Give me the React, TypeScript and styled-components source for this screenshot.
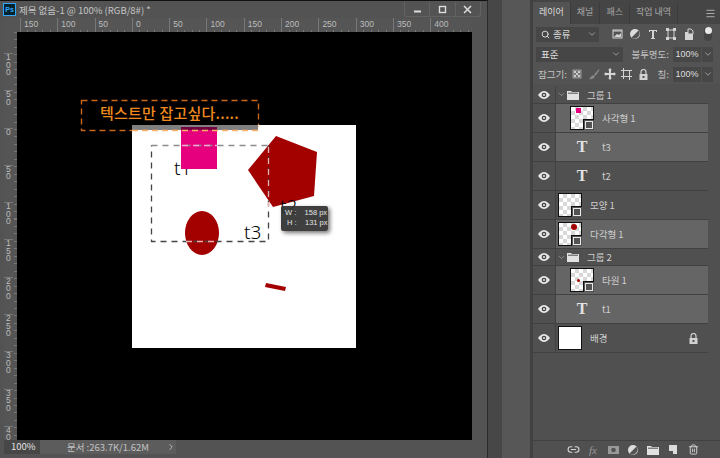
import React from "react";
import styled, { createGlobalStyle } from "styled-components";
import { ChevronDown, ChevronRight, Link2, Menu, Search, Trash2 } from "lucide-react";

const GlobalStyle = createGlobalStyle`
  html, body { margin: 0; padding: 0; background: #4a4a4a; overflow: hidden; }
  #root { width: 720px; height: 458px; }
  * { box-sizing: border-box; }
`;

const FONT = `"Noto Sans CJK KR", "Liberation Sans", sans-serif`;

const Screen = styled.div`
  width: 720px;
  height: 458px;
  display: flex;
  font-family: ${FONT};
  color: #cfcfcf;
  background: #4a4a4a;
`;

/* document window */
const Win = styled.div`
  width: 488px;
  height: 458px;
  display: flex;
  flex-direction: column;
  background: #535353;
  border-top: 1px solid #111;
  border-right: 1px solid #2b2b2b;
`;

const TitleBar = styled.div`
  height: 17px;
  display: flex;
  align-items: center;
  padding-left: 3px;
  gap: 3px;
`;

const PsLogo = styled.div`
  width: 13px;
  height: 13px;
  background: #04232f;
  border: 1px solid #31a8ff;
  color: #31a8ff;
  font: bold 7px "Liberation Sans", sans-serif;
  display: flex;
  align-items: center;
  justify-content: center;
`;

const TitleText = styled.div`
  font-size: 9.5px;
  color: #c4c4c4;
  flex: 1;
  white-space: nowrap;
`;

const WinButtons = styled.div`
  width: 77px;
  height: 15px;
  margin-right: 6px;
  display: flex;
  border: 1px solid #626262;
  border-top: none;
  border-radius: 0 0 3px 3px;
`;

const WinButton = styled.div`
  flex: 1;
  display: flex;
  align-items: center;
  justify-content: center;
  border-left: 1px solid #626262;
  &:first-child { border-left: none; }
`;

const HRuler = styled.div`
  height: 14px;
  display: flex;
  align-items: flex-start;
  margin-left: 4px;
  margin-right: 15px;
  padding-left: 16px;
  background-color: #555;
  background-image: repeating-linear-gradient(90deg, #787878 0 1px, transparent 1px 7.46px);
  background-size: 100% 2px;
  background-position: 16px bottom;
  background-repeat: no-repeat;
`;

const HTick = styled.div`
  width: 37.3px;
  flex: none;
  height: 12px;
  padding-left: 3px;
  border-left: 1px solid #787878;
  font: 8.5px/12px "Liberation Sans", sans-serif;
  color: #bcbcbc;
`;

const Middle = styled.div`
  flex: 1;
  display: flex;
  min-height: 0;
`;

const VRuler = styled.div`
  width: 13px;
  margin-left: 4px;
  display: flex;
  flex-direction: column;
  padding-top: 21px;
  overflow: hidden;
  background-color: #555;
  background-image: repeating-linear-gradient(180deg, #787878 0 1px, transparent 1px 7.46px);
  background-size: 3px 100%;
  background-position: right 0;
  background-repeat: no-repeat;
`;

const VTick = styled.div`
  height: 37.3px;
  flex: none;
  width: 9px;
  padding-left: 2px;
  border-top: 1px solid #787878;
  font: 8.5px/7.5px "Liberation Sans", sans-serif;
  color: #bcbcbc;
  word-break: break-all;
  &:last-child { height: 15px; }
`;

const Canvas = styled.div`
  position: relative;
  width: 455px;
  background: #000;
  overflow: hidden;
`;

const Doc = styled.div`
  position: absolute;
  left: 115px;
  top: 93px;
  width: 224px;
  height: 223px;
  background: #fff;
`;

const Overlay = styled.svg`
  position: absolute;
  left: 0;
  top: 0;
  overflow: visible;
`;

const Pink = styled.div`
  position: absolute;
  left: 49px;
  top: 2px;
  width: 36px;
  height: 42px;
  background: #e6007e;
`;

const DocText = styled.div<{ $x: number; $y: number }>`
  position: absolute;
  left: ${(p) => p.$x}px;
  top: ${(p) => p.$y}px;
  font: 300 19px/20px "Noto Sans", sans-serif;
  color: #000;
`;

const Shade = styled.div`
  position: absolute;
  left: 0;
  top: 0;
  width: 126px;
  height: 5px;
  background: rgba(0, 0, 0, 0.5);
`;

const Caption = styled.div`
  position: absolute;
  left: 64px;
  top: 67px;
  width: 178px;
  height: 31px;
  padding: 3px 0 0 19px;
  font-size: 15px;
  font-weight: 500;
  letter-spacing: 0.2px;
  line-height: 22px;
  color: #f08a1e;
  white-space: nowrap;
`;

const SizeTip = styled.div`
  position: absolute;
  left: 264px;
  top: 174px;
  width: 47px;
  height: 25px;
  padding: 2px 4px;
  background: rgba(48, 48, 48, 0.93);
  border-radius: 2px;
  box-shadow: 2px 2px 4px rgba(0, 0, 0, 0.55);
  font: 7.5px/10px "Liberation Sans", sans-serif;
  color: #e4e4e4;
  white-space: pre;
`;

const RightStrip = styled.div`
  flex: 1;
`;

const StatusBar = styled.div`
  height: 14px;
  margin: 0 15px 4px 4px;
  display: flex;
  align-items: center;
  font-size: 9.5px;
  background: #535353;
`;

const ZoomBox = styled.div`
  width: 36px;
  padding-left: 7px;
  height: 100%;
  line-height: 13px;
  background: #474747;
  color: #e2e2e2;
`;

const DocInfo = styled.div`
  width: 136px;
  height: 100%;
  padding-left: 27px;
  display: flex;
  align-items: center;
  justify-content: space-between;
  line-height: 13px;
  color: #c4c4c4;
  background: #5c5c5c;
`;

const Gutter = styled.div`
  width: 42px;
  background: #575757;
  display: flex;
`;

const GutterStrip = styled.div`
  width: 14px;
  background: #474747;
`;

/* layers panel */
const Panel = styled.div`
  width: 190px;
  display: flex;
  flex-direction: column;
  background: #505050;
  border-left: 3px solid #414141;
`;

const Tabs = styled.div`
  height: 24px;
  display: flex;
  align-items: flex-end;
  background: #454545;
  padding-right: 4px;
`;

const Tab = styled.div<{ $on?: boolean }>`
  height: 22px;
  padding: 0 6px;
  font-size: 9px;
  line-height: 20px;
  white-space: nowrap;
  color: ${(p) => (p.$on ? "#dcdcdc" : "#a8a8a8")};
  background: ${(p) => (p.$on ? "#535353" : "transparent")};
  border-right: 1px solid #3c3c3c;
`;

const TabSpacer = styled.div`
  flex: 1;
  height: 22px;
  display: flex;
  align-items: center;
  justify-content: flex-end;
  color: #b5b5b5;
`;

const ControlRow = styled.div`
  height: 20px;
  display: flex;
  align-items: center;
  padding: 0 7px 0 3px;
  background: #535353;
  font-size: 9.5px;
  color: #c4c4c4;
  white-space: nowrap;
`;

const FieldBox = styled.div<{ $w: number }>`
  width: ${(p) => p.$w}px;
  height: 15px;
  flex: none;
  display: flex;
  align-items: center;
  gap: 3px;
  padding: 0 2px 0 5px;
  background: #464646;
  font-size: 9.5px;
  line-height: 14px;
  color: #dedede;
`;

const FieldText = styled.span`
  flex: 1;
`;

const RowLabel = styled.div<{ $left?: string; $right: number }>`
  margin-left: ${(p) => p.$left ?? "0"};
  margin-right: ${(p) => p.$right}px;
`;

const ValueBox = styled.div`
  width: 28px;
  height: 15px;
  flex: none;
  background: #474747;
  font: 9px/15px "Liberation Sans", sans-serif;
  text-align: center;
  color: #dedede;
`;

const StepBox = styled.div`
  width: 11px;
  height: 15px;
  flex: none;
  margin-left: 1px;
  background: #474747;
  display: flex;
  align-items: center;
  justify-content: center;
`;

const IconCell = styled.div<{ $w: number }>`
  width: ${(p) => p.$w}px;
  flex: none;
  display: flex;
  justify-content: center;
  align-items: center;
`;

const IconSet = styled.div<{ $left: number }>`
  display: flex;
  align-items: center;
  margin-left: ${(p) => p.$left}px;
`;

const ToggleTrack = styled.div`
  width: 8px;
  height: 14px;
  margin-left: 6px;
  border-radius: 4px;
  background: #444;
  display: flex;
  justify-content: center;
  &::before {
    content: "";
    width: 7px;
    height: 7px;
    border-radius: 50%;
    background: #e8e8e8;
  }
`;

const LayerList = styled.div`
  margin-top: 2px;
  flex: 1;
  display: flex;
  flex-direction: column;
  margin-right: 12px;
`;

const Row = styled.div<{ $h: number; $lit?: boolean }>`
  height: ${(p) => p.$h}px;
  flex: none;
  display: flex;
  align-items: center;
  border-bottom: 1px solid #414141;
  background: ${(p) => (p.$lit ? "#656565" : "#505050")};
  font-size: 9.5px;
  color: #cfcfcf;
`;

const EyeCell = styled.div`
  width: 23px;
  height: 100%;
  flex: none;
  display: flex;
  align-items: center;
  justify-content: center;
  background: #505050;
  border-right: 1px solid #414141;
`;

const Indent = styled.div<{ $w: number }>`
  width: ${(p) => p.$w}px;
  flex: none;
`;

const Thumb = styled.div`
  position: relative;
  width: 24px;
  height: 24px;
  flex: none;
  border: 1px solid #111;
  background-color: #fff;
  background-image: conic-gradient(#d8d8d8 25%, #fff 0 50%, #d8d8d8 0 75%, #fff 0);
  background-size: 8px 8px;
`;

const PlainThumb = styled(Thumb)`
  background-image: none;
`;

const Mark = styled.div<{ $x: number; $y: number; $w: number; $h: number; $c: string; $round?: boolean }>`
  position: absolute;
  left: ${(p) => p.$x}px;
  top: ${(p) => p.$y}px;
  width: ${(p) => p.$w}px;
  height: ${(p) => p.$h}px;
  background: ${(p) => p.$c};
  border-radius: ${(p) => (p.$round ? "50%" : "0")};
`;

const Badge = styled.div`
  position: absolute;
  right: -1px;
  bottom: -1px;
  width: 11px;
  height: 11px;
  background: #535353;
  border-top: 1px solid #111;
  border-left: 1px solid #111;
  display: flex;
  align-items: center;
  justify-content: center;
  &::after {
    content: "";
    width: 6px;
    height: 6px;
    border: 1px solid #e8e8e8;
  }
`;

const LayerName = styled.div`
  margin-left: 8px;
  flex: 1;
  white-space: nowrap;
`;

const TypeGlyph = styled.div`
  width: 24px;
  flex: none;
  text-align: center;
  font: bold 16px/20px "Liberation Serif", serif;
  color: #e2e2e2;
`;

const Trailing = styled.div`
  width: 30px;
  flex: none;
  display: flex;
  justify-content: center;
`;

const Footer = styled.div`
  height: 18px;
  border-top: 1px solid #414141;
  display: flex;
  align-items: center;
  justify-content: flex-end;
  padding-right: 17px;
  background: #505050;
`;

const Fx = styled.div`
  font: italic 11px/14px "Liberation Serif", serif;
  color: #999;
`;

const Eye = () => (
  <svg width="12" height="8" viewBox="0 0 12 8">
    <path d="M0 4C2 1.2 4 0 6 0s4 1.2 6 4C10 6.8 8 8 6 8S2 6.8 0 4z" fill="#e6e6e6" />
    <circle cx="6" cy="4" r="2.3" fill="#414141" />
    <circle cx="6" cy="4" r="1.1" fill="#e6e6e6" />
  </svg>
);

const Folder = () => (
  <svg width="12" height="10" viewBox="0 0 12 10">
    <path d="M0 1h4l1 1h7v8H0z" fill="#e2e2e2" />
    <path d="M1 3.2h10" stroke="#535353" />
  </svg>
);

const LockIcon = ({ c = "#d2d2d2" }: { c?: string }) => (
  <svg width="9" height="11" viewBox="0 0 9 11">
    <path d="M2 5V3a2.5 2.5 0 0 1 5 0v2" fill="none" stroke={c} strokeWidth="1.2" />
    <rect x="0.5" y="5" width="8" height="6" fill={c} />
    <rect x="3.5" y="7" width="2" height="2" fill="#535353" />
  </svg>
);

const Thing = ({ children, w = 12, h = 12 }: { children: React.ReactNode; w?: number; h?: number }) => (
  <svg width={w} height={h} viewBox={`0 0 ${w} ${h}`}>
    {children}
  </svg>
);

const Half = () => (
  <Thing>
    <circle cx="6" cy="6" r="5" fill="#dcdcdc" />
    <path d="M9.5 2.5a5 5 0 0 1-7 7z" fill="#535353" />
  </Thing>
);

const filterIcons = [
  <Thing w={11} key="image">
    <rect x="1" y="2" width="9" height="8" fill="none" stroke="#d4d4d4" />
    <path d="M2 9l3-3 2 1 2-2v4z" fill="#d4d4d4" />
    <path d="M1 3h9" stroke="#d4d4d4" />
  </Thing>,
  <Half key="adjust" />,
  <Thing w={10} key="type">
    <path d="M1 2h8v2H8V3H6v7h1v1H3v-1h1V3H2v1H1z" fill="#d4d4d4" />
  </Thing>,
  <Thing w={10} key="shape">
    <rect x="2" y="2" width="6" height="8" fill="none" stroke="#d4d4d4" />
    <path d="M0 0h3v3H0zM7 0h3v3H7zM0 9h3v3H0zM7 9h3v3H7z" fill="#d4d4d4" />
  </Thing>,
  <Thing w={10} key="smart">
    <path d="M1 4h8v8H1z" fill="#d4d4d4" />
    <path d="M4 1h3l2 2v3H4z" fill="#535353" stroke="#d4d4d4" />
  </Thing>,
];

const lockIcons = [
  <Thing w={10} key="pixels">
    <rect x="1" y="2" width="8" height="8" fill="#777" stroke="#999" />
    <path d="M2 3h2v2H2zM6 3h2v2H6zM4 5h2v2H4zM2 7h2v2H2zM6 7h2v2H6z" fill="#ccc" />
  </Thing>,
  <Thing key="brush">
    <path d="M11 1L6 6.5 7.5 8 11.5 2z" fill="#888" />
    <path d="M5.5 7L7 8.5C6 11 3 11.5 1 11c1.5-.7 1.5-3 4.5-4z" fill="#888" />
  </Thing>,
  <Thing key="move">
    <path d="M6 0l2 2.2H7V5h2.8V4L12 6 9.8 8V7H7v2.8h1L6 12 4 9.8h1V7H2.2v1L0 6l2.2-2v1H5V2.2H4z" fill="#d4d4d4" />
  </Thing>,
  <Thing w={11} key="artboard">
    <path d="M2.5 0v11M8.5 3v9M0 2.5h11M0 8.5h11" stroke="#d4d4d4" fill="none" />
  </Thing>,
  <LockIcon key="lock" />,
];

const footerIcons = [
  <Link2 size={13} color="#d4d4d4" key="link" />,
  <Fx key="fx">fx</Fx>,
  <Thing w={11} key="mask">
    <rect y="2" width="11" height="8" fill="#999" />
    <circle cx="5.5" cy="6" r="2.3" fill="#535353" />
  </Thing>,
  <Half key="adjust" />,
  <Folder key="folder" />,
  <Thing w={10} key="new">
    <path d="M1 1h8v9H5v-3H1z" fill="#dcdcdc" />
  </Thing>,
  <Trash2 size={11} color="#d4d4d4" key="trash" />,
];

const Tiny = () => <ChevronDown size={10} color="#c8c8c8" strokeWidth={1.5} />;

const Percent = () => (
  <>
    <ValueBox>100%</ValueBox>
    <StepBox>
      <Tiny />
    </StepBox>
  </>
);

type LayerRow = {
  name: string;
  lit?: boolean;
  child?: boolean;
  mark?: React.ReactNode;
};

const GroupRow = ({ name, h }: { name: string; h: number }) => (
  <Row $h={h}>
    <EyeCell>
      <Eye />
    </EyeCell>
    <Indent $w={1} />
    <ChevronDown size={9} color="#bbb" strokeWidth={1.5} />
    <Indent $w={1} />
    <Folder />
    <LayerName>{name}</LayerName>
  </Row>
);

const ShapeRow = ({ name, lit, child, mark }: LayerRow) => (
  <Row $h={29} $lit={lit}>
    <EyeCell>
      <Eye />
    </EyeCell>
    <Indent $w={child ? 14 : 2} />
    <Thumb>
      {mark}
      <Badge />
    </Thumb>
    <LayerName>{name}</LayerName>
  </Row>
);

const TypeRow = ({ name, lit }: { name: string; lit?: boolean }) => (
  <Row $h={29} $lit={lit}>
    <EyeCell>
      <Eye />
    </EyeCell>
    <Indent $w={14} />
    <TypeGlyph>T</TypeGlyph>
    <LayerName>{name}</LayerName>
  </Row>
);

const hTicks = ["150", "100", "50", "0", "50", "100", "150", "200", "250", "300", "350", "400"];
const vTicks = ["100", "50", "0", "50", "100", "150", "200", "250", "300", "350", "40"];

export default function App() {
  return (
    <Screen>
      <GlobalStyle />
      <Win>
        <TitleBar>
          <PsLogo>Ps</PsLogo>
          <TitleText>제목 없음-1 @ 100% (RGB/8#) *</TitleText>
          <WinButtons>
            <WinButton>
              <Thing w={9} h={9}>
                <path d="M1 6.5h7" stroke="#ddd" strokeWidth="2" />
              </Thing>
            </WinButton>
            <WinButton>
              <Thing w={9} h={9}>
                <rect x="1.5" y="1.5" width="6" height="6" fill="none" stroke="#ddd" strokeWidth="1.4" />
              </Thing>
            </WinButton>
            <WinButton>
              <Thing w={9} h={9}>
                <path d="M1 1l7 7M8 1L1 8" stroke="#ddd" strokeWidth="1.5" />
              </Thing>
            </WinButton>
          </WinButtons>
        </TitleBar>
        <HRuler>
          {hTicks.map((t, i) => (
            <HTick key={i}>{t}</HTick>
          ))}
        </HRuler>
        <Middle>
          <VRuler>
            {vTicks.map((t, i) => (
              <VTick key={i}>{t}</VTick>
            ))}
          </VRuler>
          <Canvas>
            <Overlay width="455" height="409">
              <rect x="64.5" y="68.5" width="177" height="30" fill="none" stroke="#c8661a" strokeWidth="1.4" strokeDasharray="6 4" />
            </Overlay>
            <Doc>
              <Overlay width="224" height="223">
                <path d="M144 11l41 16-3 44-41 11-25-37z" fill="#a30000" />
                <ellipse cx="70" cy="108" rx="17" ry="22" fill="#a30000" />
                <path d="M134 158l20 4-1 4-20-4z" fill="#a30000" />
              </Overlay>
              <DocText $x={42} $y={33}>t1</DocText>
              <DocText $x={148} $y={71}>t2</DocText>
              <DocText $x={112} $y={97}>t3</DocText>
              <Pink />
              <Shade />
              <Overlay width="224" height="223">
                <path d="M19.5 20.5h117" stroke="#8c8c8c" strokeWidth="1.3" strokeDasharray="6 5" fill="none" />
                <path d="M136.5 20.5v96H19.5v-96" stroke="#444" strokeWidth="1.3" strokeDasharray="6 5" fill="none" />
                <path d="M50 20.5h35" stroke="#f7a8d0" strokeWidth="1.3" strokeDasharray="6 5" />
                <path d="M136.5 22v60" stroke="#e8b0b0" strokeWidth="1.3" strokeDasharray="6 5" />
                <path d="M54 116.5h33" stroke="#e8b0b0" strokeWidth="1.3" strokeDasharray="6 5" />
                <path d="M0 5.5h126.5V1" stroke="#ffb268" strokeWidth="1.4" strokeDasharray="6 4" fill="none" />
              </Overlay>
            </Doc>
            <Caption>텍스트만 잡고싶다.....</Caption>
            <SizeTip>{"W :    158 px\n H :    131 px"}</SizeTip>
          </Canvas>
          <RightStrip />
        </Middle>
        <StatusBar>
          <ZoomBox>100%</ZoomBox>
          <DocInfo>
            문서 :263.7K/1.62M
            <ChevronRight size={10} color="#c8c8c8" />
          </DocInfo>
        </StatusBar>
      </Win>
      <Gutter>
        <GutterStrip />
      </Gutter>
      <Panel>
        <Tabs>
          <Tab $on>레이어</Tab>
          <Tab>채널</Tab>
          <Tab>패스</Tab>
          <Tab>작업 내역</Tab>
          <TabSpacer>
            <Menu size={11} />
          </TabSpacer>
        </Tabs>
        <ControlRow>
          <FieldBox $w={63}>
            <Search size={9} color="#e0e0e0" strokeWidth={2.5} />
            <FieldText>종류</FieldText>
            <Tiny />
          </FieldBox>
          <IconSet $left={9}>
            {filterIcons.map((icon) => (
              <IconCell $w={18} key={icon.key}>
                {icon}
              </IconCell>
            ))}
          </IconSet>
          <ToggleTrack />
        </ControlRow>
        <ControlRow>
          <FieldBox $w={87}>
            <FieldText>표준</FieldText>
            <Tiny />
          </FieldBox>
          <RowLabel $left="auto" $right={4}>불투명도:</RowLabel>
          <Percent />
        </ControlRow>
        <ControlRow>
          <RowLabel $left="2px" $right={0}>잠그기:</RowLabel>
          <IconSet $left={2}>
            {lockIcons.map((icon) => (
              <IconCell $w={16.5} key={icon.key}>
                {icon}
              </IconCell>
            ))}
          </IconSet>
          <RowLabel $left="auto" $right={4}>칠:</RowLabel>
          <Percent />
        </ControlRow>
        <LayerList>
          <GroupRow name="그룹 1" h={18} />
          <ShapeRow name="사각형 1" lit child mark={<Mark $x={5} $y={1} $w={5} $h={5} $c="#e6007e" />} />
          <TypeRow name="t3" lit />
          <TypeRow name="t2" />
          <ShapeRow name="모양 1" />
          <ShapeRow name="다각형 1" lit mark={<Mark $x={12} $y={1} $w={6} $h={6} $c="#a30000" $round />} />
          <GroupRow name="그룹 2" h={17} />
          <ShapeRow name="타원 1" lit child mark={<Mark $x={6} $y={10} $w={3} $h={3} $c="#a30000" $round />} />
          <TypeRow name="t1" lit />
          <Row $h={29}>
            <EyeCell>
              <Eye />
            </EyeCell>
            <Indent $w={2} />
            <PlainThumb />
            <LayerName>배경</LayerName>
            <Trailing>
              <LockIcon />
            </Trailing>
          </Row>
        </LayerList>
        <Footer>
          {footerIcons.map((icon) => (
            <IconCell $w={20} key={icon.key}>
              {icon}
            </IconCell>
          ))}
        </Footer>
      </Panel>
    </Screen>
  );
}
